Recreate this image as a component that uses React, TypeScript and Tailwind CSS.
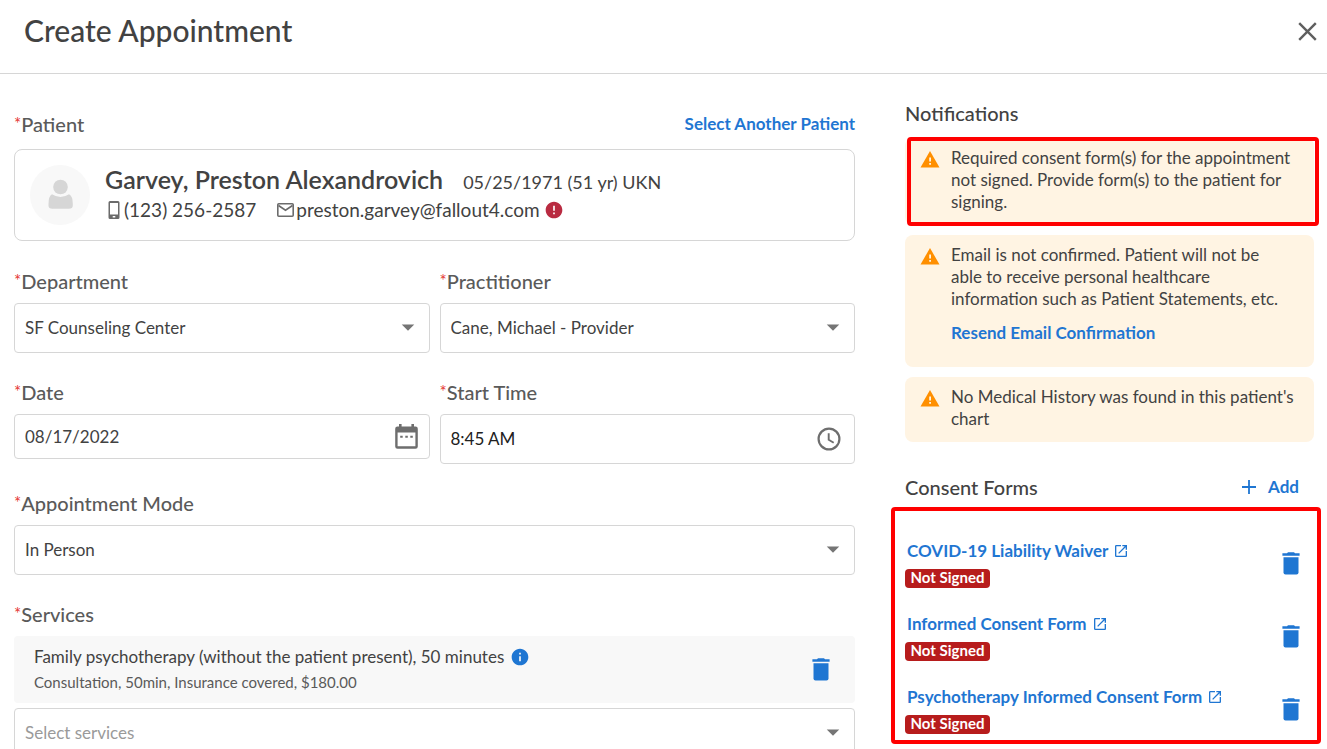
import React, { useState } from "react";
import { MdArrowDropDown, MdError, MdInfo, MdOutlineOpenInNew } from "react-icons/md";

const FORMS = ["COVID-19 Liability Waiver", "Informed Consent Form", "Psychotherapy Informed Consent Form"];

function TrashIcon() {
  return (
    <svg width="18" height="23" viewBox="0 0 18 23" fill="currentColor" aria-hidden="true">
      <path d="M5 1.2 6 .3h6l1 .9h4.6v2.6H.4V1.2z" />
      <path d="M1.5 5.2h15v15.3a2 2 0 0 1-2 2h-11a2 2 0 0 1-2-2z" />
    </svg>
  );
}

function WarningIcon() {
  return (
    <svg width="20" height="17" viewBox="0 0 20 17" className="shrink-0 mt-1" aria-hidden="true">
      <path d="M10 0 19.5 16.5H.5z" fill="#ff8f00" />
      <path d="M9.2 6.5h1.8v4H9.2zM9.2 12h1.8v1.8H9.2z" fill="#fff4e3" />
    </svg>
  );
}

function Label({ htmlFor, children }: { htmlFor?: string; children: React.ReactNode }) {
  return (
    <label htmlFor={htmlFor} className="flex text-[20px] leading-6 font-medium text-[#5a5a5a]">
      <span className="text-[17px] text-[#e53935] font-normal">*</span>
      {children}
    </label>
  );
}

function SelectField({ id, label, value }: { id: string; label?: string; value: string }) {
  return (
    <div className="flex-1 min-w-0">
      {label && <Label htmlFor={id}>{label}</Label>}
      <div className={label ? "relative mt-[10px]" : "relative"}>
        <select
          id={id}
          className={
            label
              ? "appearance-none w-full h-[50px] pl-[10px] pr-10 bg-white border border-[#d6d6d6] rounded text-[17px] text-[#424242]"
              : "appearance-none w-full h-[50px] pl-[10px] pr-10 bg-white border border-[#d6d6d6] rounded text-[17px] text-[#9a9a9a]"
          }
        >
          <option>{value}</option>
        </select>
        <MdArrowDropDown size={30} className="absolute right-[7px] top-[9px] text-[#757575] pointer-events-none" />
      </div>
    </div>
  );
}

function Notice({ children, marked }: { children: React.ReactNode; marked?: boolean }) {
  return (
    <div className="relative flex gap-[11px] pl-[15px] pr-3 pt-[9px] pb-3 bg-[#fff4e3] rounded-lg text-[17px] leading-[22px] text-[#424242]">
      <WarningIcon />
      <div>{children}</div>
      {marked && <span className="absolute left-[2px] -right-[5px] -top-px -bottom-px border-4 border-[#ff0000] rounded-sm" />}
    </div>
  );
}

export default function App() {
  const [date, setDate] = useState("08/17/2022");
  const [time, setTime] = useState("8:45 AM");

  return (
    <div className="h-screen overflow-hidden bg-white font-[Lato,sans-serif] text-[#424242]">
      <header className="flex items-center justify-between h-[74px] pl-6 pr-[10px] pb-[10px] border-b border-[#d6d6d6]">
        <h1 className="mb-1 text-[30px] leading-9 font-medium">Create Appointment</h1>
        <button aria-label="Close" className="text-[#5f5f5f]">
          <svg width="19" height="19" viewBox="0 0 19 19" fill="none" stroke="currentColor" strokeWidth="2.4" aria-hidden="true">
            <path d="M1.2 1.2 17.8 17.8M17.8 1.2 1.2 17.8" />
          </svg>
        </button>
      </header>

      <div className="flex items-start gap-[50px] pl-[14px] pr-[13px]">
        <main className="flex-1 min-w-0 pt-[37px]">
          <div className="flex items-center justify-between h-[25px]">
            <Label>Patient</Label>
            <button className="text-[17px] font-bold text-[#1f76d2]">Select Another Patient</button>
          </div>
          <section className="flex items-center gap-[15px] h-[92px] mt-[13px] pl-[15px] border border-[#d6d6d6] rounded-lg">
            <svg width="60" height="60" viewBox="0 0 60 60" className="shrink-0" aria-hidden="true">
              <circle cx="30" cy="30" r="30" fill="#f8f8f8" />
              <circle cx="30.5" cy="22" r="7.3" fill="#d6d6d6" />
              <path d="M22 29.200q8.500 5.500 17 0Q42.800 31 42.800 39v1.500q0 3.300-4 3.300H22.500q-4 0-4-3.300V39q0-8 3.500-9.800z" fill="#d6d6d6" />
            </svg>
            <div className="pb-[2px]">
              <div className="flex items-baseline gap-5 leading-7">
                <h2 className="text-[25px] font-semibold">Garvey, Preston Alexandrovich</h2>
                <span className="text-[18px]">05/25/1971 (51 yr) UKN</span>
              </div>
              <div className="flex items-center text-[19px] leading-7">
                <svg width="12" height="18" viewBox="0 0 12 18" className="ml-[3px] mr-1" aria-hidden="true">
                  <path fillRule="evenodd" d="M2 0h8a1.500 1.500 0 0 1 1.500 1.500v15A1.500 1.500 0 0 1 10 18H2a1.500 1.500 0 0 1-1.500-1.500v-15A1.500 1.500 0 0 1 2 0zM2 2v11.500h8V2zM4.700 15v1.500h2.600V15z" fill="#6b6b6b" />
                </svg>
                <span>(123) 256-2587</span>
                <svg width="17" height="14" viewBox="0 0 17 14" className="ml-[21px] mr-[2px]" fill="none" stroke="#6b6b6b" strokeWidth="1.600" aria-hidden="true">
                  <rect x=".8" y=".8" width="15.400" height="12.400" rx="1" />
                  <path d="M1.500 2.500l7 4.700 7-4.700" />
                </svg>
                <span>preston.garvey@fallout4.com</span>
                <MdError size={20} className="ml-1 text-[#b92b41]" />
              </div>
            </div>
          </section>

          <div className="flex gap-[10px] mt-7">
            <SelectField id="department" label="Department" value="SF Counseling Center" />
            <SelectField id="practitioner" label="Practitioner" value="Cane, Michael - Provider" />
          </div>

          <div className="flex items-start gap-[10px] mt-[27px]">
            <div className="flex-1 min-w-0">
              <Label htmlFor="date">Date</Label>
              <div className="flex items-center h-[45px] mt-[10px] pl-[10px] pr-[11px] border border-[#d6d6d6] rounded">
                <input
                  id="date"
                  value={date}
                  onChange={(e) => setDate(e.target.value)}
                  className="flex-1 min-w-0 text-[17px] outline-none"
                />
                <svg width="23" height="25" viewBox="0 0 23 25" fill="#6e6e6e" aria-hidden="true">
                  <path fillRule="evenodd" d="M4 0h2.600v2.500h9.800V0H19v2.500h1.500A2.300 2.300 0 0 1 22.800 4.800v17.700a2.300 2.300 0 0 1-2.300 2.300h-18A2.300 2.300 0 0 1 .2 22.500V4.800A2.300 2.300 0 0 1 2.500 2.500H4zM2.600 8.500v13.800h17.800V8.500z" />
                  <path d="M5.200 11.700h2.500v2H5.200zM10.300 11.700h2.500v2h-2.500zM15.300 11.700h2.500v2h-2.500z" />
                </svg>
              </div>
            </div>
            <div className="flex-1 min-w-0">
              <Label htmlFor="time">Start Time</Label>
              <div className="flex items-center h-[50px] mt-[10px] pl-[10px] pr-[13px] border border-[#d6d6d6] rounded">
                <input
                  id="time"
                  value={time}
                  onChange={(e) => setTime(e.target.value)}
                  className="flex-1 min-w-0 text-[17px] text-[#212121] outline-none"
                />
                <svg width="24" height="24" viewBox="0 0 24 24" fill="none" stroke="#6e6e6e" strokeWidth="2.200" aria-hidden="true">
                  <circle cx="12" cy="12" r="10.400" />
                  <path d="M11.700 6.200v6.500l5 3" strokeWidth="1.900" />
                </svg>
              </div>
            </div>
          </div>

          <div className="flex mt-[27px]">
            <SelectField id="mode" label="Appointment Mode" value="In Person" />
          </div>

          <div className="mt-[27px]">
            <Label htmlFor="services">Services</Label>
            <div className="flex items-center justify-between h-[67px] mt-[10px] mb-[5px] pl-5 pr-[25px] bg-[#f8f8f8] rounded">
              <div className="pb-[2px]">
                <div className="flex items-center gap-[6px] text-[17px] leading-[26px]">
                  Family psychotherapy (without the patient present), 50 minutes
                  <MdInfo size={20} className="text-[#1f76d2]" />
                </div>
                <div className="text-[15px] leading-6 text-[#5a5a5a]">Consultation, 50min, Insurance covered, $180.00</div>
              </div>
              <button aria-label="Remove service" className="text-[#1f76d2]">
                <TrashIcon />
              </button>
            </div>
            <SelectField id="services" value="Select services" />
          </div>
        </main>

        <aside className="w-[409px] shrink-0 pt-[27px]">
          <h3 className="text-[20px] leading-6 font-medium">Notifications</h3>
          <div className="flex flex-col gap-[10px] mt-[13px]">
            <Notice marked>
              Required consent form(s) for the appointment not signed. Provide form(s) to the patient for signing.
            </Notice>
            <Notice>
              <p className="pr-3">
                Email is not confirmed. Patient will not be able to receive personal healthcare information such as Patient
                Statements, etc.
              </p>
              <button className="block mt-3 mb-[11px] font-bold text-[#1f76d2]">Resend Email Confirmation</button>
            </Notice>
            <Notice>No Medical History was found in this patient's chart</Notice>
          </div>

          <div className="flex items-center justify-between mt-[33px] pr-[15px]">
            <h3 className="text-[20px] leading-6 font-medium">Consent Forms</h3>
            <button className="flex items-center gap-3 text-[17px] leading-6 font-bold text-[#1f76d2]">
              <svg width="14" height="14" viewBox="0 0 14 14" stroke="currentColor" strokeWidth="1.800" aria-hidden="true">
                <path d="M7 0v14M0 7h14" />
              </svg>
              Add
            </button>
          </div>

          <ul className="-ml-[14px] -mr-[7px] mt-2 pl-[10px] pr-[17px] pt-7 border-4 border-[#ff0000] rounded-sm">
            {FORMS.map((form) => (
              <li key={form} className="flex items-center justify-between h-[49px] mb-6 last:mb-[6px]">
                <div>
                  <a href="#" className="flex items-center gap-[5px] pl-[2px] text-[17px] leading-6 font-bold text-[#1f76d2]">
                    {form}
                    <MdOutlineOpenInNew size={16} />
                  </a>
                  <span className="block w-[85px] h-[19px] mt-[6px] bg-[#b71c1c] rounded text-[15px] leading-[17px] font-bold text-white text-center">
                    Not Signed
                  </span>
                </div>
                <button aria-label={`Remove ${form}`} className="text-[#1f76d2]">
                  <TrashIcon />
                </button>
              </li>
            ))}
          </ul>
        </aside>
      </div>
    </div>
  );
}
